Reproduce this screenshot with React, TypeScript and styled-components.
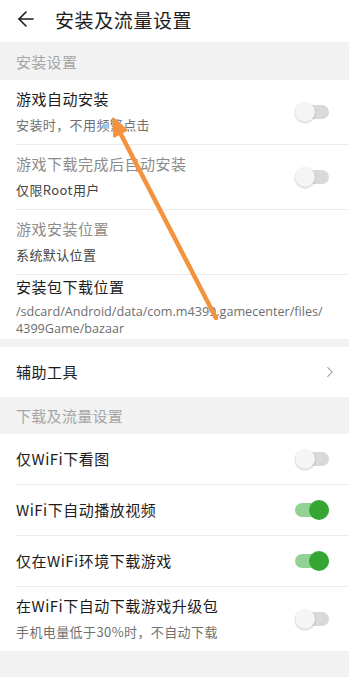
import React from 'react';
import styled, { createGlobalStyle } from 'styled-components';
import { ArrowLeft, ChevronRight } from 'lucide-react';

const GlobalStyle = createGlobalStyle`
  html, body {
    margin: 0;
    padding: 0;
    background: #f2f2f2;
  }
  body {
    font-family: "Noto Sans CJK SC", "Noto Sans", sans-serif;
    -webkit-font-smoothing: antialiased;
  }
`;

const Page = styled.div`
  position: relative;
  width: 349px;
  min-height: 677px;
  background: #f2f2f2;
  overflow: hidden;
`;

const Header = styled.div`
  display: flex;
  align-items: center;
  gap: 17px;
  height: 42px;
  padding: 0 16px 4px 14px;
  box-sizing: border-box;
  background: #fff;
  color: #1c1c1c;
`;

const HeaderTitle = styled.h1`
  margin: 0;
  font-size: 19px;
  font-weight: 400;
  letter-spacing: 0.6px;
`;

const SectionTitle = styled.div<{ $h: number }>`
  display: flex;
  align-items: center;
  height: ${(p) => p.$h}px;
  padding: 0 16px;
  font-size: 15px;
  color: #a6a6a6;
  letter-spacing: 0.3px;
`;

const Group = styled.div<{ $gap?: boolean }>`
  background: #fff;
  margin-bottom: ${(p) => (p.$gap ? 8 : 0)}px;
`;

const Row = styled.div<{ $h: number; $divider?: boolean }>`
  position: relative;
  display: flex;
  align-items: center;
  min-height: ${(p) => p.$h}px;
  padding: ${(p) => (p.$divider ? 1 : 0)}px 20px 0 16px;
  box-sizing: border-box;
  &::before {
    content: '';
    display: ${(p) => (p.$divider ? 'block' : 'none')};
    position: absolute;
    top: 0;
    left: 16px;
    right: 0;
    height: 1px;
    background: #ececec;
  }
`;

const RowBody = styled.div<{ $top?: number }>`
  flex: 1;
  display: flex;
  flex-direction: column;
  padding-top: ${(p) => p.$top ?? 0}px;
  align-self: ${(p) => (p.$top !== undefined ? 'flex-start' : 'center')};
`;

const Title = styled.div<{ $muted?: boolean }>`
  font-size: 15px;
  line-height: 20px;
  letter-spacing: 0.5px;
  color: ${(p) => (p.$muted ? '#8c8c8c' : '#1c1c1c')};
`;

const Sub = styled.div<{ $dark?: boolean }>`
  margin-top: 6px;
  font-size: 13px;
  line-height: 20px;
  letter-spacing: 0.4px;
  color: ${(p) => (p.$dark ? '#444' : '#707070')};
`;

const Path = styled.div`
  margin-top: 6px;
  font-family: "Open Sans", "Noto Sans", sans-serif;
  font-size: 12.6px;
  line-height: 17px;
  color: #6e6e6e;
`;

const Track = styled.div<{ $on?: boolean }>`
  position: relative;
  width: 34px;
  height: 14px;
  border-radius: 7px;
  background: ${(p) => (p.$on ? '#93d292' : '#d9d9d9')};
  flex-shrink: 0;
`;

const Knob = styled.div<{ $on?: boolean }>`
  position: absolute;
  top: -3px;
  left: ${(p) => (p.$on ? 14 : 0)}px;
  width: 20px;
  height: 20px;
  border-radius: 50%;
  background: ${(p) => (p.$on ? '#35a633' : '#f5f5f5')};
  box-shadow: ${(p) => (p.$on ? 'none' : '0 1px 2px rgba(0,0,0,0.22)')};
`;

const Chevron = styled(ChevronRight)`
  color: #8e8e8e;
  margin-right: -10px;
`;

const Overlay = styled.svg`
  position: absolute;
  left: 0;
  top: 0;
  pointer-events: none;
`;

const Toggle = ({ on }: { on?: boolean }) => (
  <Track $on={on}>
    <Knob $on={on} />
  </Track>
);

export default function App() {
  return (
    <>
      <GlobalStyle />
      <Page>
        <Header>
          <ArrowLeft size={24} strokeWidth={1.6} />
          <HeaderTitle>安装及流量设置</HeaderTitle>
        </Header>

        <SectionTitle $h={38}>安装设置</SectionTitle>
        <Group $gap>
          <Row $h={64}>
            <RowBody>
              <Title>游戏自动安装</Title>
              <Sub>安装时，不用频繁点击</Sub>
            </RowBody>
            <Toggle />
          </Row>
          <Row $h={65} $divider>
            <RowBody>
              <Title $muted>游戏下载完成后自动安装</Title>
              <Sub $dark>仅限Root用户</Sub>
            </RowBody>
            <Toggle />
          </Row>
          <Row $h={65} $divider>
            <RowBody>
              <Title $muted>游戏安装位置</Title>
              <Sub $dark>系统默认位置</Sub>
            </RowBody>
          </Row>
          <Row $h={65} $divider>
            <RowBody $top={2}>
              <Title>安装包下载位置</Title>
              <Path>
                /sdcard/Android/data/com.m4399.gamecenter/files/
                <br />
                4399Game/bazaar
              </Path>
            </RowBody>
          </Row>
        </Group>

        <Group>
          <Row $h={50}>
            <RowBody>
              <Title>辅助工具</Title>
            </RowBody>
            <Chevron size={18} strokeWidth={1.4} />
          </Row>
        </Group>

        <SectionTitle $h={37}>下载及流量设置</SectionTitle>
        <Group>
          <Row $h={50}>
            <RowBody>
              <Title>仅WiFi下看图</Title>
            </RowBody>
            <Toggle />
          </Row>
          <Row $h={51} $divider>
            <RowBody>
              <Title>WiFi下自动播放视频</Title>
            </RowBody>
            <Toggle on />
          </Row>
          <Row $h={51} $divider>
            <RowBody>
              <Title>仅在WiFi环境下载游戏</Title>
            </RowBody>
            <Toggle on />
          </Row>
          <Row $h={65} $divider>
            <RowBody>
              <Title>在WiFi下自动下载游戏升级包</Title>
              <Sub>手机电量低于30%时，不自动下载</Sub>
            </RowBody>
            <Toggle />
          </Row>
        </Group>

        <Overlay width={349} height={677} viewBox="0 0 349 677">
          <line
            x1={216}
            y1={318}
            x2={120.4}
            y2={133.2}
            stroke="#f5923e"
            strokeWidth={4.5}
            strokeLinecap="round"
          />
          <polygon
            points="113,118 127,130 114,137"
            fill="#f5923e"
            stroke="#f5923e"
            strokeWidth={1.5}
            strokeLinejoin="round"
          />
        </Overlay>
      </Page>
    </>
  );
}
